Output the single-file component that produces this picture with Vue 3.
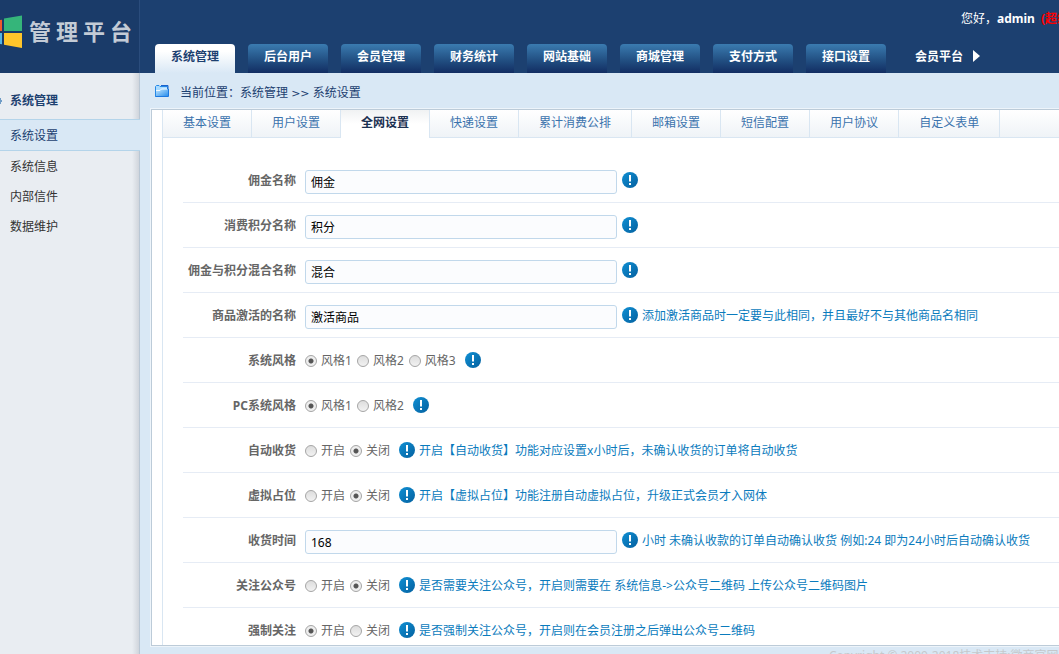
<script setup>
import { reactive, ref } from 'vue'

const brand = ['管', '理', '平', '台']
const nav = ['系统管理', '后台用户', '会员管理', '财务统计', '网站基础', '商城管理', '支付方式', '接口设置']
const activeNav = ref('系统管理')

const side = ['系统设置', '系统信息', '内部信件', '数据维护']
const activeSide = ref('系统设置')

const tabs = ['基本设置', '用户设置', '全网设置', '快递设置', '累计消费公排', '邮箱设置', '短信配置', '用户协议', '自定义表单']
const activeTab = ref('全网设置')

const rows = reactive([
  { id: 'commission', label: '佣金名称', value: '佣金' },
  { id: 'points', label: '消费积分名称', value: '积分' },
  { id: 'mixed', label: '佣金与积分混合名称', value: '混合' },
  { id: 'goods', label: '商品激活的名称', value: '激活商品', hint: '添加激活商品时一定要与此相同，并且最好不与其他商品名相同' },
  { id: 'style', label: '系统风格', options: ['风格1', '风格2', '风格3'], value: '风格1' },
  { id: 'pcstyle', label: 'PC系统风格', options: ['风格1', '风格2'], value: '风格1' },
  { id: 'receive', label: '自动收货', options: ['开启', '关闭'], value: '关闭', hint: '开启【自动收货】功能对应设置x小时后，未确认收货的订单将自动收货' },
  { id: 'virtual', label: '虚拟占位', options: ['开启', '关闭'], value: '关闭', hint: '开启【虚拟占位】功能注册自动虚拟占位，升级正式会员才入网体' },
  { id: 'hours', label: '收货时间', value: '168', hint: '小时 未确认收款的订单自动确认收货 例如:24 即为24小时后自动确认收货' },
  { id: 'follow', label: '关注公众号', options: ['开启', '关闭'], value: '关闭', hint: '是否需要关注公众号，开启则需要在 系统信息->公众号二维码 上传公众号二维码图片' },
  { id: 'force', label: '强制关注', options: ['开启', '关闭'], value: '开启', hint: '是否强制关注公众号，开启则在会员注册之后弹出公众号二维码' },
])
</script>

<template>
  <div class="app">
    <header class="header">
      <div class="logo">
        <svg class="mark" width="23" height="34" viewBox="0 0 23 34" aria-hidden="true">
          <path d="M0 5L2 4.700V16H0z" fill="#f1592a" />
          <path d="M4 3.500L22 .5V16H4z" fill="#35b57a" />
          <path d="M0 18H2V29.300L0 29z" fill="#55b4e4" />
          <path d="M4 18H22V33L4 29.700z" fill="#ffc52b" />
        </svg>
        <div class="brand"><span v-for="c in brand" :key="c">{{ c }}</span></div>
      </div>
      <div class="head-main">
        <div class="user">您好，<b>admin</b><b class="role">(超级管理员)</b></div>
        <nav class="nav">
          <a v-for="n in nav" :key="n" href="#" :class="{ on: n === activeNav }" @click.prevent="activeNav = n">{{ n }}</a>
          <a href="#" class="plain">会员平台
            <svg width="7" height="12" viewBox="0 0 7 12" aria-hidden="true"><path d="M0 0L7 6L0 12z" fill="#fff" /></svg>
          </a>
        </nav>
      </div>
    </header>

    <div class="body">
      <aside class="side">
        <h2>
          <svg width="3" height="8" viewBox="0 0 3 8" aria-hidden="true"><path d="M0 1H1V3H2V5H1V7H0z" fill="#6f9cc6" /></svg>
          系统管理
        </h2>
        <a v-for="s in side" :key="s" href="#" :class="{ on: s === activeSide }" @click.prevent="activeSide = s">{{ s }}</a>
      </aside>

      <main class="main">
        <div class="crumb">
          <svg width="14" height="12" viewBox="0 0 14 12" aria-hidden="true">
            <defs>
              <linearGradient id="folder" x1="0" y1="0" x2="1" y2="1">
                <stop offset="0" stop-color="#c4e8ff" /><stop offset="1" stop-color="#2b8fec" />
              </linearGradient>
            </defs>
            <path d="M.5 11.500V1.500L1.500.5H4L5 1.500H12.500V11.500z" fill="#a9dbff" stroke="#2588e6" />
            <path d="M6 .5H13V4" fill="none" stroke="#1c62cc" />
            <path d="M1 5.500H5L6.500 4H13V11H1z" fill="url(#folder)" />
            <path d="M1 5.500H5L6.500 4H12" fill="none" stroke="#f1faff" />
            <path d="M.5 11.500H13.500V4" fill="none" stroke="#1b78e0" />
          </svg>
          <span>当前位置：系统管理 <span class="sep">&gt;&gt;</span> 系统设置</span>
        </div>

        <section class="panel">
          <div class="sheet">
            <div class="tabs">
              <button v-for="t in tabs" :key="t" type="button" :class="{ on: t === activeTab }" @click="activeTab = t">{{ t }}</button>
            </div>
            <form class="form" @submit.prevent>
              <div v-for="r in rows" :key="r.id" class="row">
                <template v-if="r.options">
                  <span class="name" :id="r.id">{{ r.label }}</span>
                  <div class="radios" role="radiogroup" :aria-labelledby="r.id">
                    <label v-for="o in r.options" :key="o"><input v-model="r.value" type="radio" :name="r.id + '-choice'" :value="o">{{ o }}</label>
                  </div>
                </template>
                <template v-else>
                  <label class="name" :for="r.id">{{ r.label }}</label>
                  <input :id="r.id" v-model="r.value" class="text" type="text">
                </template>
                <svg class="info" width="16" height="16" viewBox="0 0 16 16" aria-hidden="true">
                  <defs>
                    <linearGradient :id="'g-' + r.id" x1="0" y1="0" x2="1" y2="1">
                      <stop offset="0" stop-color="#1090d4" /><stop offset="1" stop-color="#04609f" />
                    </linearGradient>
                  </defs>
                  <circle cx="8" cy="8" r="8" :fill="'url(#g-' + r.id + ')'" />
                  <path d="M7 3H9V9.500H7zM7 11H9V13H7z" fill="#fff" />
                </svg>
                <span class="hint">{{ r.hint }}</span>
              </div>
            </form>
          </div>
        </section>
        <footer class="foot">Copyright © 2009-2018技术支持:微商官网</footer>
      </main>
    </div>
  </div>
</template>

<style>
body {
  margin: 0;
  background: #d9e8f5;
}
</style>

<style scoped>
.app {
  display: flex;
  flex-direction: column;
  height: 100vh;
  overflow: hidden;
  font: 12px/18px "Noto Sans", "Noto Sans CJK SC", sans-serif;
  color: #666;
}
a {
  text-decoration: none;
}
.header {
  display: flex;
  flex: none;
  height: 73px;
  background: #1c4070;
}
.logo {
  display: flex;
  flex: none;
  box-sizing: border-box;
  width: 140px;
  padding-top: 15px;
  background: #1a3b69;
  border-right: 1px solid #2a4c7c;
}
.brand {
  display: flex;
  gap: 5px;
  padding-left: 6px;
  font-size: 22px;
  line-height: 32px;
  font-weight: bold;
  color: #c3cbd6;
}
.head-main {
  display: flex;
  flex: 1 0 1000px;
  flex-direction: column;
  justify-content: space-between;
}
.user {
  display: flex;
  align-self: flex-end;
  width: 179px;
  padding-top: 10px;
  white-space: nowrap;
  color: #fff;
}
.role {
  margin-left: 6px;
  color: #f00;
}
.nav {
  display: flex;
  gap: 13px;
  padding-left: 15px;
}
.nav a {
  width: 80px;
  height: 29px;
  line-height: 26px;
  border-radius: 4px 4px 0 0;
  text-align: center;
  font-weight: bold;
  color: #fff;
  background: linear-gradient(#3a7bb0, #225083 55%, #122d62);
}
.nav a.on {
  color: #1c4070;
  background: linear-gradient(#fff 25%, #d9e8f5);
}
.nav a.plain {
  display: flex;
  gap: 10px;
  align-items: flex-start;
  padding-left: 16px;
  background: none;
}
.plain svg {
  margin-top: 6px;
}
.body {
  display: flex;
  flex: 1;
  min-height: 0;
}
.side {
  flex: none;
  box-sizing: border-box;
  width: 140px;
  background: linear-gradient(to right, #e9edf2 95%, #d0d5dc);
  border-right: 1px solid #b9c7d5;
}
.side h2 {
  display: flex;
  align-items: center;
  gap: 7px;
  height: 36px;
  margin: 0;
  padding-top: 10px;
  font-size: 12px;
  color: #1c4070;
}
.side a {
  display: block;
  height: 30px;
  line-height: 31px;
  padding-left: 10px;
  color: #333;
}
.side a.on {
  margin-right: -1px;
  border-top: 1px solid #b4d4ea;
  border-bottom: 1px solid #b4d4ea;
  color: #1c4070;
  background: #d9e8f5;
}
.main {
  display: flex;
  flex: 1 0 1000px;
  flex-direction: column;
  box-sizing: border-box;
  padding-left: 11px;
}
.crumb {
  display: flex;
  flex: none;
  align-items: center;
  gap: 11px;
  height: 36px;
  padding-left: 4px;
  color: #1c4070;
}
.crumb > span {
  padding-top: 4px;
}
.sep {
  font-family: "DejaVu Sans", sans-serif;
  font-size: 11px;
}
.panel {
  flex: 1;
  min-height: 0;
  padding-left: 10px;
  border: 1px solid #bccbd8;
  overflow: hidden;
  background: #fff;
  box-shadow: 0 0 0 1px #edf4fa;
}
.sheet {
  min-height: 100%;
  border-left: 1px solid #d9e6f2;
}
.tabs {
  display: flex;
  height: 27px;
  border-bottom: 1px solid #d9e6f2;
  background: linear-gradient(#fff, #eff3f7);
}
.tabs button {
  margin: 0;
  padding: 0 20px 1px;
  border: 0;
  border-right: 1px solid #d9e6f2;
  font: inherit;
  color: #3b73ad;
  background: none;
}
.tabs button.on {
  height: 28px;
  padding-bottom: 2px;
  font-weight: bold;
  color: #1c3152;
  background: linear-gradient(#f0f2f3, #fff 50%);
}
.form {
  padding: 20px 20px 0;
}
.row {
  display: flex;
  align-items: center;
  height: 44px;
  border-bottom: 1px solid #e6ecf5;
}
.name {
  flex: none;
  width: 113px;
  margin-right: 9px;
  padding-top: 2px;
  text-align: right;
  font-weight: bold;
}
.text {
  box-sizing: border-box;
  width: 312px;
  height: 24px;
  margin: 4px -4px 0 0;
  padding: 0 5px;
  border: 1px solid #c1d8eb;
  border-radius: 3px;
  font: inherit;
  color: #000;
  background: #fbfcfe;
}
.radios {
  display: flex;
  gap: 5px;
  padding-top: 2px;
}
.radios label {
  display: flex;
  align-items: center;
  gap: 4px;
}
.radios input {
  appearance: none;
  box-sizing: border-box;
  width: 12px;
  height: 12px;
  margin: 0;
  border: 1px solid #a5a5a5;
  border-radius: 50%;
  background: linear-gradient(#ddd, #f2f2f2);
}
.radios input:checked {
  background: radial-gradient(circle, #555 0 2px, #eee 3px);
}
.info {
  flex: none;
  margin-left: 9px;
  margin-right: 4px;
}
.hint {
  padding-top: 2px;
  white-space: nowrap;
  color: #0a7bbd;
}
.foot {
  flex: none;
  height: 8px;
  padding-left: 678px;
  line-height: 20px;
  overflow: hidden;
  color: #c5c8cc;
}
</style>
